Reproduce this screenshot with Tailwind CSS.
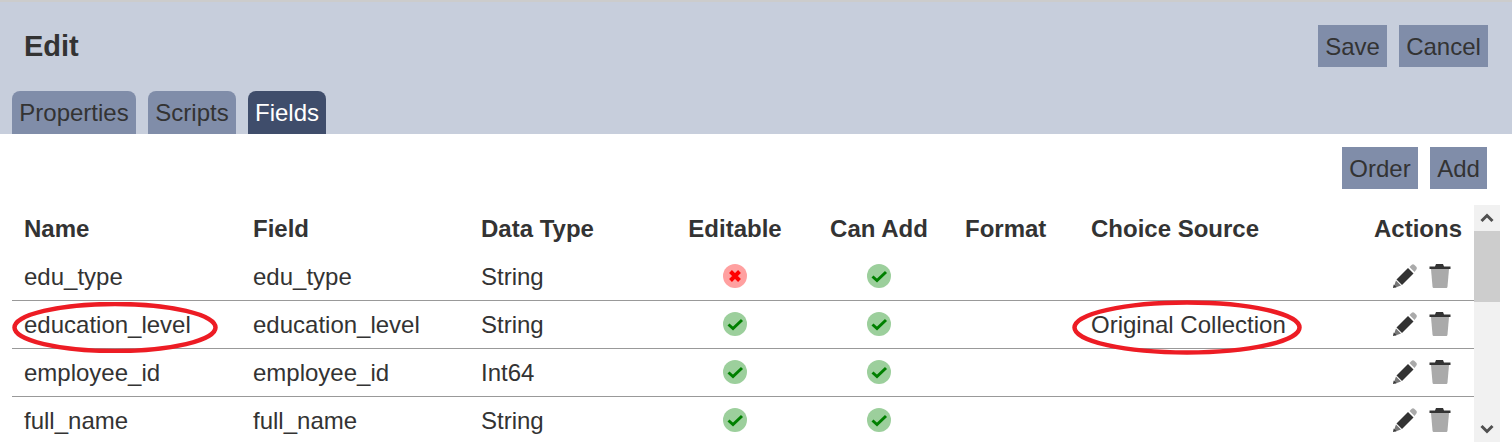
<!DOCTYPE html>
<html lang="en">
<head>
    <meta charset="UTF-8">
    <title>Edit - Fields</title>
    <script src="https://cdn.jsdelivr.net/npm/@tailwindcss/browser@4"></script>
</head>
<body class="relative h-[442px] overflow-hidden bg-white text-[24px] leading-none text-[#333] font-['Liberation_Sans',Arial,sans-serif]">

    <svg class="hidden">
        <symbol id="yes" viewBox="0 0 24 24">
            <circle cx="12" cy="12" r="12" fill="#9ccf9c"/>
            <path d="M5.500 12.500L10 16.500L19 8" fill="none" stroke="#008000" stroke-width="3"/>
        </symbol>
        <symbol id="no" viewBox="0 0 24 24">
            <circle cx="12" cy="12" r="12" fill="#ffa0a0"/>
            <path d="M7.500 7.500L16.500 16.500M16.500 7.500L7.500 16.500" fill="none" stroke="#ff0000" stroke-width="4"/>
        </symbol>
        <symbol id="pencil" viewBox="0 0 24 24">
            <path d="M3.500 15.500L15 4L20.500 9.500L9 21Z" fill="#333"/>
            <path d="M16.500 3L18.500 1C19.500 0 20.500 0 21.500 1L23.500 3C24 4 24 5 23 6L21.500 8Z" fill="#aaa"/>
            <path d="M3 16.500L8 21.500L2.500 23.500L1 22Z" fill="#777"/>
            <path d="M.7 20.500L3.500 23.300L0 24Z" fill="#333"/>
        </symbol>
        <symbol id="trash" viewBox="0 0 24 24">
            <path d="M7 2.500L8 0H15L16 2.500H22.500V5H1.500V2.500Z" fill="#333"/>
            <path d="M3 5H21L19.500 22.500C19.400 23.500 18.800 24 18 24H6C5.200 24 4.600 23.500 4.500 22.500Z" fill="#aaa"/>
        </symbol>
    </svg>

    <!-- header -->
    <div class="h-[134px] border-t-2 border-[#ccc] bg-[#c7cedc]">
        <div class="flex justify-between pt-[23px] pr-[24px] pl-[24px]">
            <h1 class="pt-[5px] text-[29px] leading-[32px] font-bold">Edit</h1>
            <div class="flex gap-3">
                <button class="h-[42px] w-[69px] bg-[#808da9] pt-[2px]">Save</button>
                <button class="h-[42px] w-[89px] bg-[#808da9] pt-[2px]">Cancel</button>
            </div>
        </div>
        <div class="mt-[24px] flex gap-3 pl-3">
            <div class="flex h-[43px] w-[124px] items-center justify-center rounded-t-lg bg-[#808da9]">Properties</div>
            <div class="flex h-[43px] w-[88px] items-center justify-center rounded-t-lg bg-[#808da9]">Scripts</div>
            <div class="flex h-[43px] w-[78px] items-center justify-center rounded-t-lg bg-[#3f4d6b] text-white">Fields</div>
        </div>
    </div>

    <!-- toolbar -->
    <div class="flex justify-end gap-3 pt-[13px] pr-[25px]">
        <button class="h-[42px] w-[76px] bg-[#808da9] pt-[2px]">Order</button>
        <button class="h-[42px] w-[57px] bg-[#808da9] pt-[2px]">Add</button>
    </div>

    <!-- fields table -->
    <div class="mt-4 ml-3 flex h-[237px] w-[1488px] overflow-hidden">
        <div class="w-[1462px]">
            <div class="grid h-12 grid-cols-[229px_228px_194px_144px_144px_128px_283px_112px] items-center font-bold">
                <div class="pl-3">Name</div>
                <div class="pl-3">Field</div>
                <div class="pl-3">Data Type</div>
                <div class="text-center">Editable</div>
                <div class="text-center">Can Add</div>
                <div class="pl-[14px]">Format</div>
                <div class="pl-3">Choice Source</div>
                <div class="text-center">Actions</div>
            </div>

            <div class="grid h-12 grid-cols-[229px_228px_194px_144px_144px_128px_283px_112px] items-center border-b border-[#999]">
                <div class="pl-3">edu_type</div>
                <div class="pl-3">edu_type</div>
                <div class="pl-3">String</div>
                <div class="mb-[2px] flex justify-center"><svg class="size-6"><use href="#no"/></svg></div>
                <div class="mb-[2px] flex justify-center"><svg class="size-6"><use href="#yes"/></svg></div>
                <div></div>
                <div></div>
                <div class="mb-[2px] flex gap-[11px] pl-[31px]"><svg class="size-6"><use href="#pencil"/></svg><svg class="size-6"><use href="#trash"/></svg></div>
            </div>

            <div class="grid h-12 grid-cols-[229px_228px_194px_144px_144px_128px_283px_112px] items-center border-b border-[#999]">
                <div class="pl-3">education_level</div>
                <div class="pl-3">education_level</div>
                <div class="pl-3">String</div>
                <div class="mb-[2px] flex justify-center"><svg class="size-6"><use href="#yes"/></svg></div>
                <div class="mb-[2px] flex justify-center"><svg class="size-6"><use href="#yes"/></svg></div>
                <div></div>
                <div class="pl-3">Original Collection</div>
                <div class="mb-[2px] flex gap-[11px] pl-[31px]"><svg class="size-6"><use href="#pencil"/></svg><svg class="size-6"><use href="#trash"/></svg></div>
            </div>

            <div class="grid h-12 grid-cols-[229px_228px_194px_144px_144px_128px_283px_112px] items-center border-b border-[#999]">
                <div class="pl-3">employee_id</div>
                <div class="pl-3">employee_id</div>
                <div class="pl-3">Int64</div>
                <div class="mb-[2px] flex justify-center"><svg class="size-6"><use href="#yes"/></svg></div>
                <div class="mb-[2px] flex justify-center"><svg class="size-6"><use href="#yes"/></svg></div>
                <div></div>
                <div></div>
                <div class="mb-[2px] flex gap-[11px] pl-[31px]"><svg class="size-6"><use href="#pencil"/></svg><svg class="size-6"><use href="#trash"/></svg></div>
            </div>

            <div class="grid h-12 grid-cols-[229px_228px_194px_144px_144px_128px_283px_112px] items-center border-b border-[#999]">
                <div class="pl-3">full_name</div>
                <div class="pl-3">full_name</div>
                <div class="pl-3">String</div>
                <div class="mb-[2px] flex justify-center"><svg class="size-6"><use href="#yes"/></svg></div>
                <div class="mb-[2px] flex justify-center"><svg class="size-6"><use href="#yes"/></svg></div>
                <div></div>
                <div></div>
                <div class="mb-[2px] flex gap-[11px] pl-[31px]"><svg class="size-6"><use href="#pencil"/></svg><svg class="size-6"><use href="#trash"/></svg></div>
            </div>
        </div>

        <!-- scrollbar -->
        <div class="flex w-[26px] flex-col bg-[#f1f1f1]">
            <div class="flex h-[26px] items-center justify-center">
                <svg class="h-[10px] w-[14px]" viewBox="0 0 14 10"><path d="M1.500 8L7 2.500L12.500 8" fill="none" stroke="#505050" stroke-width="3"/></svg>
            </div>
            <div class="h-[71px] bg-[#cdcdcd]"></div>
            <div class="mt-auto flex h-[26px] items-center justify-center">
                <svg class="h-[10px] w-[14px]" viewBox="0 0 14 10"><path d="M1.500 2L7 7.500L12.500 2" fill="none" stroke="#505050" stroke-width="3"/></svg>
            </div>
        </div>
    </div>

    <!-- red annotations drawn over the table -->
    <svg class="absolute top-[302px] left-[12px] h-[51px] w-[206px]" viewBox="0 0 206 51">
        <ellipse cx="103" cy="25.500" rx="100.500" ry="23.500" fill="none" stroke="#ed1c24" stroke-width="4.500"/>
    </svg>
    <svg class="absolute top-[300px] left-[1072px] h-[55px] w-[230px]" viewBox="0 0 230 55">
        <ellipse cx="115" cy="27.500" rx="112.500" ry="25" fill="none" stroke="#ed1c24" stroke-width="4.500"/>
    </svg>

</body>
</html>
